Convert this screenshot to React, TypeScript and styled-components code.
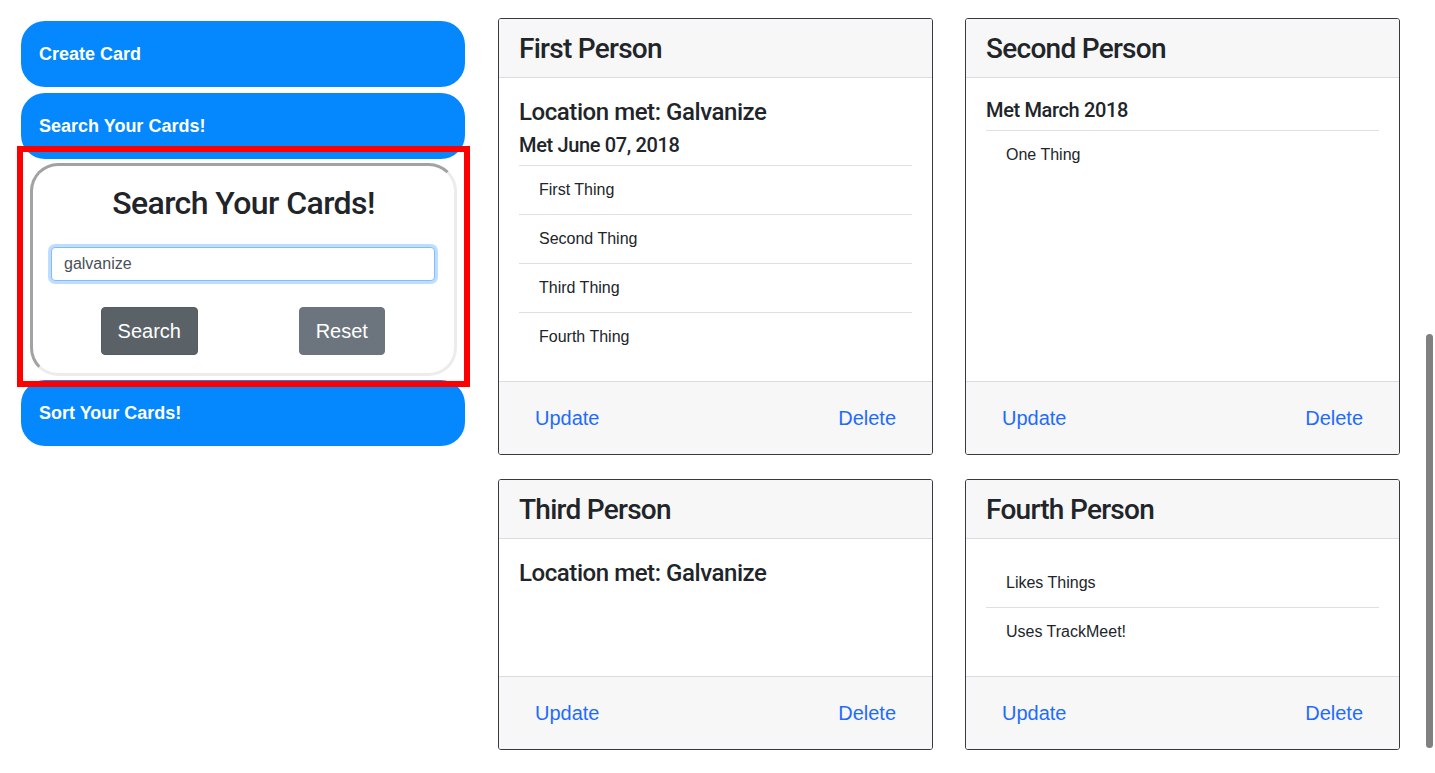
import React from "react";
import styled, { createGlobalStyle } from "styled-components";

const GlobalStyle = createGlobalStyle`
  html, body {
    margin: 0;
    padding: 0;
    background: #ffffff;
    overflow: hidden;
  }
  body {
    font-family: "Liberation Sans", Arial, sans-serif;
    color: #212529;
    font-size: 16px;
    line-height: 1.5;
  }
  * { box-sizing: border-box; }
`;

const Page = styled.div`
  display: flex;
  align-items: flex-start;
  gap: 33px;
  padding: 18px 0 0 21px;
  height: 773px;
`;

const Sidebar = styled.div`
  width: 444px;
  margin-top: 3px;
  display: flex;
  flex-direction: column;
`;

const PillButton = styled.button`
  display: flex;
  align-items: center;
  height: 66px;
  width: 100%;
  padding: 1px 18px 0;
  border: none;
  border-radius: 24px;
  background: #0588fe;
  color: #ffffff;
  font-family: "Liberation Sans", Arial, sans-serif;
  font-weight: 700;
  font-size: 18px;
  text-align: left;
  cursor: pointer;
  & + & { margin-top: 6px; }
`;

const PanelWrap = styled.div`
  position: relative;
  margin: 4px 8px 4px 9px;
`;

const Highlight = styled.div`
  position: absolute;
  top: -17px;
  left: -13px;
  right: -13px;
  bottom: -11px;
  border: 6px solid #ff0000;
  z-index: 2;
  pointer-events: none;
`;

const SearchPanel = styled.div`
  height: 213px;
  border: 3px solid;
  border-color: #a2a2a2 #ececec #ececec #a2a2a2;
  border-radius: 28px;
  background: #ffffff;
  padding: 18px 0 18px;
  display: flex;
  flex-direction: column;
`;

const PanelTitle = styled.h2`
  margin: 0;
  font-family: Roboto, "Liberation Sans", sans-serif;
  font-weight: 500;
  font-size: 32px;
  line-height: 38px;
  letter-spacing: -0.018em;
  text-align: center;
  color: #212529;
`;

const InputRow = styled.div`
  padding: 0 19px 0 18px;
  margin-top: 25px;
`;

const SearchInput = styled.input`
  display: block;
  width: 100%;
  height: 34px;
  padding: 0 12px;
  border: 1px solid #80bdff;
  border-radius: 4px;
  box-shadow: 0 0 0 3px rgba(0, 123, 255, 0.25);
  font-family: "Liberation Sans", Arial, sans-serif;
  font-size: 16px;
  color: #495057;
  outline: none;
`;

const ButtonRow = styled.div`
  display: grid;
  grid-template-columns: 1fr 1fr;
  justify-items: center;
  padding: 0 16px 0 20px;
  margin-top: 26px;
`;

const GreyButton = styled.button<{ $dark?: boolean }>`
  height: 48px;
  padding: 0 16px;
  border: 1px solid ${(p) => (p.$dark ? "#545b62" : "#6c757d")};
  border-radius: 4px;
  background: ${(p) => (p.$dark ? "#5a6268" : "#6c757d")};
  color: #ffffff;
  font-family: "Liberation Sans", Arial, sans-serif;
  font-size: 20px;
  line-height: 30px;
  cursor: pointer;
`;

const CardGrid = styled.div`
  display: grid;
  grid-template-columns: 435px 435px;
  column-gap: 32px;
  row-gap: 24px;
`;

const Card = styled.div`
  display: flex;
  flex-direction: column;
  border: 1px solid #343a40;
  border-radius: 3px;
  background: #ffffff;
  overflow: hidden;
`;

const CardHeader = styled.div`
  background: #f7f7f7;
  padding: 12px 20px;
  border-bottom: 1px solid #dcdcdc;
`;

const CardTitle = styled.h3`
  margin: 0;
  padding-top: 1px;
  font-family: Roboto, "Liberation Sans", sans-serif;
  font-weight: 500;
  font-size: 28px;
  line-height: 33px;
  letter-spacing: -0.026em;
  color: #212529;
`;

const CardBody = styled.div`
  flex: 1;
  padding: 20px;
`;

const Location = styled.h4`
  margin: 0 0 6px;
  font-family: Roboto, "Liberation Sans", sans-serif;
  font-weight: 500;
  font-size: 24px;
  line-height: 29px;
  letter-spacing: -0.018em;
  color: #212529;
`;

const MetDate = styled.h5`
  margin: 0 0 8px;
  font-family: Roboto, "Liberation Sans", sans-serif;
  font-weight: 500;
  font-size: 20px;
  line-height: 24px;
  letter-spacing: -0.018em;
  color: #212529;
`;

const ThingList = styled.ul`
  list-style: none;
  margin: 0;
  padding: 0;
  &:not(:first-child) { border-top: 1px solid #dfdfdf; }
`;

const ThingItem = styled.li`
  padding: 12px 20px;
  font-size: 16px;
  line-height: 24px;
  color: #212529;
  & + & { border-top: 1px solid #dfdfdf; }
`;

const CardFooter = styled.div`
  display: flex;
  justify-content: space-between;
  background: #f7f7f7;
  border-top: 1px solid #dcdcdc;
  padding: 12px 20px;
`;

const LinkButton = styled.button`
  height: 48px;
  padding: 0 16px;
  border: none;
  background: transparent;
  color: #1f6bff;
  font-family: "Liberation Sans", Arial, sans-serif;
  font-size: 20px;
  line-height: 30px;
  cursor: pointer;
`;

const ScrollThumb = styled.div`
  position: fixed;
  right: 2px;
  top: 334px;
  width: 7px;
  height: 414px;
  border-radius: 4px;
  background: #808080;
`;

type Person = {
  name: string;
  location?: string;
  met?: string;
  things: string[];
};

const people: Person[] = [
  {
    name: "First Person",
    location: "Location met: Galvanize",
    met: "Met June 07, 2018",
    things: ["First Thing", "Second Thing", "Third Thing", "Fourth Thing"],
  },
  { name: "Second Person", met: "Met March 2018", things: ["One Thing"] },
  { name: "Third Person", location: "Location met: Galvanize", things: [] },
  { name: "Fourth Person", things: ["Likes Things", "Uses TrackMeet!"] },
];

function PersonCard({ person }: { person: Person }) {
  return (
    <Card>
      <CardHeader>
        <CardTitle>{person.name}</CardTitle>
      </CardHeader>
      <CardBody>
        {person.location && <Location>{person.location}</Location>}
        {person.met && <MetDate>{person.met}</MetDate>}
        {person.things.length > 0 && (
          <ThingList>
            {person.things.map((t) => (
              <ThingItem key={t}>{t}</ThingItem>
            ))}
          </ThingList>
        )}
      </CardBody>
      <CardFooter>
        <LinkButton>Update</LinkButton>
        <LinkButton>Delete</LinkButton>
      </CardFooter>
    </Card>
  );
}

export default function App() {
  return (
    <>
      <GlobalStyle />
      <Page>
        <Sidebar>
          <PillButton>Create Card</PillButton>
          <PillButton>Search Your Cards!</PillButton>
          <PanelWrap>
            <SearchPanel>
              <PanelTitle>Search Your Cards!</PanelTitle>
              <InputRow>
                <SearchInput defaultValue="galvanize" />
              </InputRow>
              <ButtonRow>
                <GreyButton $dark>Search</GreyButton>
                <GreyButton>Reset</GreyButton>
              </ButtonRow>
            </SearchPanel>
            <Highlight />
          </PanelWrap>
          <PillButton>Sort Your Cards!</PillButton>
        </Sidebar>
        <CardGrid>
          {people.map((p) => (
            <PersonCard key={p.name} person={p} />
          ))}
        </CardGrid>
      </Page>
      <ScrollThumb />
    </>
  );
}
